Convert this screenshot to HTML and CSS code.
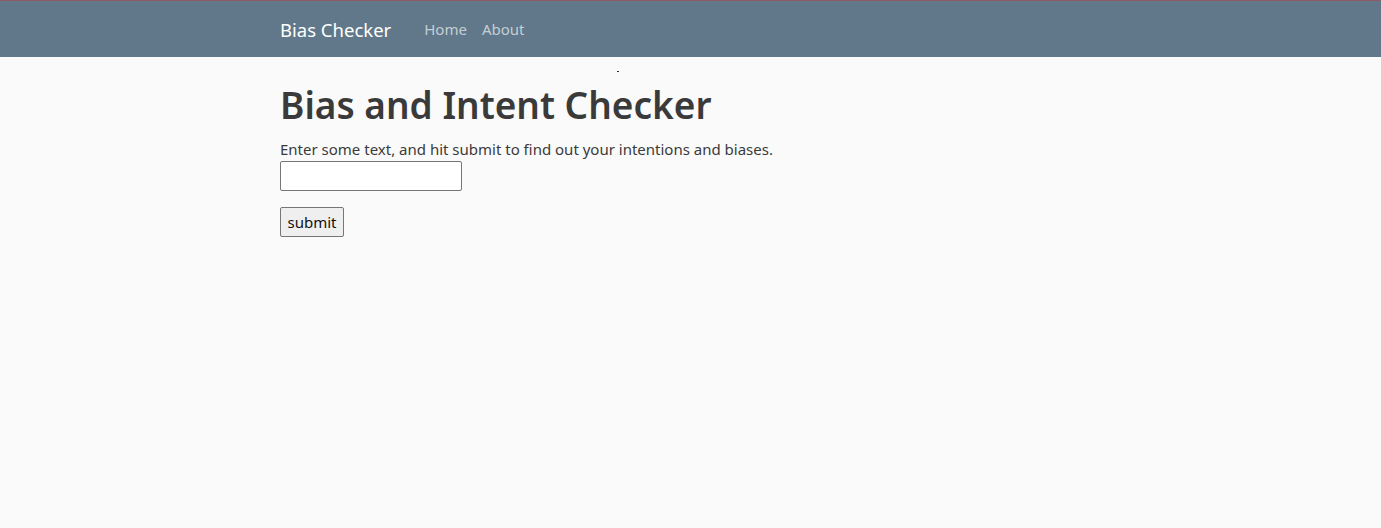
FILE: index.html
```html
<!DOCTYPE html>
<html>
<head>
<meta charset="utf-8">
<link rel="stylesheet" href="styles.css">
</head>
<body>
<nav class="navbar">
  <div class="container nav-inner">
    <a class="brand">Bias Checker</a>
    <a class="nav-link">Home</a>
    <a class="nav-link">About</a>
  </div>
</nav>
<main class="container main">
  <span class="dot"></span>
  <h1 class="title">Bias and Intent Checker</h1>
  <p class="lead">Enter some text, and hit submit to find out your intentions and biases.</p>
  <form class="form">
    <input class="text-input" type="text">
    <button class="submit" type="button">submit</button>
  </form>
</main>
</body>
</html>
```
FILE: styles.css
```css
html, body {
  margin: 0;
  padding: 0;
  background: #fafafa;
  font-family: "Noto Sans", "Open Sans", sans-serif;
  color: #3a3a3a;
}
.container {
  padding-left: 280px;
}
.navbar {
  background: #607889;
  border-top: 1px solid #8e5a63;
  box-sizing: border-box;
  height: 57px;
}
.nav-inner {
  display: flex;
  align-items: center;
  height: 100%;
}
.brand {
  color: #fff;
  font-size: 18.5px;
  margin-right: 33px;
}
.nav-link {
  color: rgba(255,255,255,0.65);
  font-size: 15px;
  margin-right: 15px;
}
.main {
  position: relative;
  padding-top: 25px;
}
.dot {
  position: absolute;
  left: 617px;
  top: 14px;
  width: 2px;
  height: 1px;
  background: #2a2a40;
}
.title {
  margin: 0 0 11px;
  font-size: 37px;
  font-weight: 600;
  line-height: 45px;
}
.lead {
  margin: 0 0 1px;
  font-size: 15px;
  line-height: 22px;
}
.form {
  display: flex;
  flex-direction: column;
  align-items: flex-start;
}
.text-input {
  width: 182px;
  height: 30px;
  box-sizing: border-box;
  border: 1px solid #767676;
  border-radius: 2px;
  background: #fff;
  margin: 0 0 16px;
}
.submit {
  font-family: inherit;
  font-size: 15px;
  width: 64px;
  height: 30px;
  padding: 0;
  background: #efefef;
  border: 1px solid #767676;
  border-radius: 2px;
  color: #111;
}
```
